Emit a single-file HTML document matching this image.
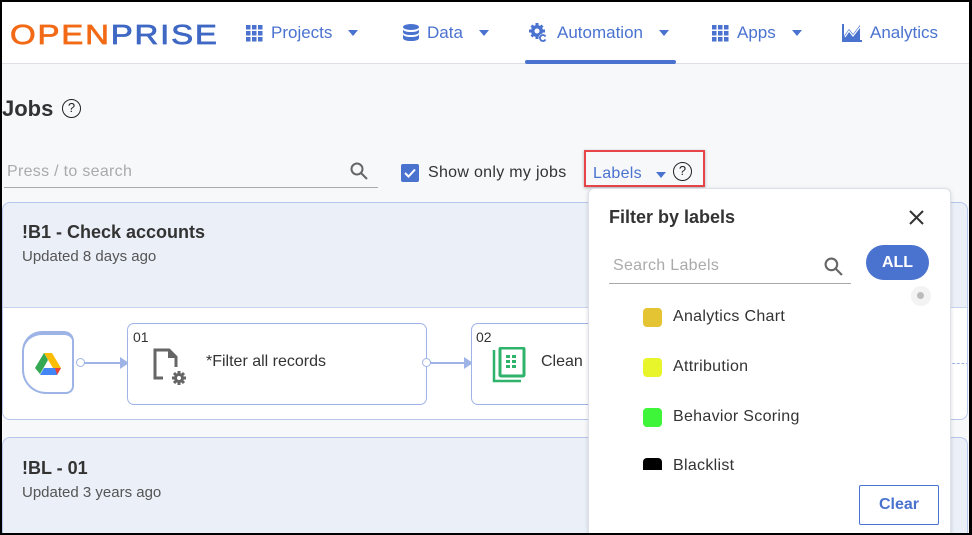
<!DOCTYPE html>
<html><head><meta charset="utf-8"><style>
*{box-sizing:border-box;margin:0;padding:0}
body{width:972px;height:535px;overflow:hidden;background:#000;font-family:"Liberation Sans",sans-serif;position:relative}
#pg{position:absolute;left:2px;top:2px;width:967px;height:531px;background:#f7f8fa;overflow:hidden}
.nav{position:absolute;left:0;top:0;width:967px;height:62px;background:#fff;border-bottom:1px solid #dcdfe4}
.ni{position:absolute;top:21px;font-size:17px;color:#4a72cf;display:flex;align-items:center;gap:8px}
.car{width:0;height:0;border-left:5px solid transparent;border-right:5px solid transparent;border-top:6px solid #4a72cf;margin-left:8px}
.t{position:absolute;white-space:nowrap}
.card{position:absolute;left:0;width:966px;border:1px solid #b6c6ea;border-radius:8px;background:#ebeff8;overflow:hidden}
.step{position:absolute;background:#fff;border:1px solid #9eb4e6;border-radius:7px}
.pop{position:absolute;left:586px;top:186px;width:363px;height:350px;background:#fff;border:1px solid #dde0e6;border-radius:6px;box-shadow:0 1px 4px rgba(0,0,0,.15)}
.lab{position:absolute;left:54px;font-size:16px;color:#333;letter-spacing:.3px}
.sw{position:absolute;left:54px;width:19px;height:19px;border-radius:4px}
.arr{position:absolute;width:0;height:0;border-top:6px solid transparent;border-bottom:6px solid transparent;border-left:9px solid #9eb4e6}
</style></head><body><div id="pg">
<div class="nav">
 <div class="t" style="left:8px;top:17px;font-size:28px;letter-spacing:1.5px;-webkit-text-stroke:0.7px;transform:scaleX(1.18);transform-origin:left"><span style="color:#f26a16">OPEN</span><span style="color:#3f68c4">PRISE</span></div>
 <div class="ni" style="left:244px"><svg width="17" height="17" viewBox="0 0 17 17" fill="#4a72cf"><rect x="0" y="0" width="4.5" height="4.5"/><rect x="6" y="0" width="4.5" height="4.5"/><rect x="12" y="0" width="4.5" height="4.5"/><rect x="0" y="6" width="4.5" height="4.5"/><rect x="6" y="6" width="4.5" height="4.5"/><rect x="12" y="6" width="4.5" height="4.5"/><rect x="0" y="12" width="4.5" height="4.5"/><rect x="6" y="12" width="4.5" height="4.5"/><rect x="12" y="12" width="4.5" height="4.5"/></svg>Projects<span class="car"></span></div>
 <div class="ni" style="left:401px"><svg width="16" height="18" viewBox="0 0 16 18" fill="#4a72cf"><ellipse cx="8" cy="3" rx="8" ry="3"/><path d="M0 5c0 2 3.5 3 8 3s8-1 8-3v3c0 2-3.5 3-8 3S0 10 0 8z"/><path d="M0 10c0 2 3.5 3 8 3s8-1 8-3v4c0 2-3.5 3-8 3s-8-1-8-3z"/></svg>Data<span class="car"></span></div>
 <div class="ni" style="left:527px"><svg width="20" height="20" viewBox="0 0 20 20" fill="#4a72cf"><circle cx="8" cy="8" r="6"/><g stroke="#4a72cf" stroke-width="3"><path d="M8 0v16M0 8h16M2.5 2.5l11 11M13.5 2.5l-11 11"/></g><circle cx="8" cy="8" r="2.5" fill="#fff"/><circle cx="14" cy="15" r="4.5" fill="#fff"/><path d="M16.5 13.5a3 3 0 1 0 0 3" stroke="#4a72cf" stroke-width="1.8" fill="none"/></svg>Automation<span class="car"></span></div>
 <div style="position:absolute;left:523px;top:58px;width:151px;height:4px;background:#4a72cf;border-radius:2px"></div>
 <div class="ni" style="left:710px"><svg width="17" height="17" viewBox="0 0 17 17" fill="#4a72cf"><rect x="0" y="0" width="4.5" height="4.5"/><rect x="6" y="0" width="4.5" height="4.5"/><rect x="12" y="0" width="4.5" height="4.5"/><rect x="0" y="6" width="4.5" height="4.5"/><rect x="6" y="6" width="4.5" height="4.5"/><rect x="12" y="6" width="4.5" height="4.5"/><rect x="0" y="12" width="4.5" height="4.5"/><rect x="6" y="12" width="4.5" height="4.5"/><rect x="12" y="12" width="4.5" height="4.5"/></svg>Apps<span class="car"></span></div>
 <div class="ni" style="left:840px"><svg width="20" height="18" viewBox="0 0 20 18"><path d="M1 0v17h19" stroke="#4a72cf" stroke-width="2" fill="none"/><path d="M2 16V12l5-7 4 5 7-9v15z" fill="#4a72cf"/><path d="M3 13l4-6 4 5 7-9" stroke="#fff" stroke-width="1.2" fill="none"/></svg>Analytics</div>
</div>
<div class="t" style="left:0;top:94px;font-size:22px;font-weight:bold;color:#333">Jobs</div>
<div class="t" style="left:60px;top:97px;width:19px;height:19px;border:1.5px solid #222;border-radius:50%;font-size:13px;text-align:center;line-height:16px;color:#222">?</div>
<div class="t" style="left:5px;top:161px;font-size:16px;color:#aaa;letter-spacing:.3px">Press / to search</div>
<svg class="t" style="left:348px;top:160px" width="18" height="18" viewBox="0 0 18 18"><circle cx="7" cy="7" r="5.5" stroke="#666" stroke-width="2" fill="none"/><path d="M11 11l6 6" stroke="#666" stroke-width="2"/></svg>
<div class="t" style="left:2px;top:185px;width:374px;height:1px;background:#aaa"></div>
<div class="t" style="left:399px;top:162px;width:18px;height:18px;background:#4a72cf;border-radius:2px"><svg width="18" height="18"><path d="M4 9l3.5 3.5L14 5.5" stroke="#fff" stroke-width="2" fill="none"/></svg></div>
<div class="t" style="left:426px;top:162px;font-size:16px;color:#333;letter-spacing:.3px">Show only my jobs</div>
<div class="t" style="left:582px;top:148px;width:121px;height:37px;border:2px solid #e8454a;box-shadow:0 1px 3px rgba(0,0,0,.3)"></div>
<div class="t" style="left:591px;top:163px;font-size:16px;color:#4a72cf;letter-spacing:.3px">Labels</div>
<div class="t" style="left:654px;top:170px;border-left:5px solid transparent;border-right:5px solid transparent;border-top:6px solid #4a72cf"></div>
<div class="t" style="left:671px;top:160px;width:19px;height:19px;border:1.5px solid #222;border-radius:50%;font-size:13px;text-align:center;line-height:16px;color:#222">?</div>

<div class="card" style="top:200px;height:218px">
 <div class="t" style="left:19px;top:19px;font-size:18px;font-weight:bold;color:#333">!B1 - Check accounts</div>
 <div class="t" style="left:19px;top:45px;font-size:15px;color:#555">Updated 8 days ago</div>
 <div style="position:absolute;left:0;top:104px;width:966px;height:114px;background:#fff;border-top:1px solid #c8d3ee"></div>
 <div class="t" style="left:19px;top:128px;width:52px;height:63px;border:2px solid #9eb4e6;border-top-width:4px;border-radius:20px 10px 8px 24px;background:#fff"></div>
 <svg class="t" style="left:32px;top:150px" width="26" height="22" viewBox="0 0 26 22"><path d="M9 0h8l9 15h-8z" fill="#fbbc04"/><path d="M9 0l4 7-8 14L0 15z" fill="#34a853"/><path d="M5 22l4-7h17l-4 7z" fill="#4285f4"/><path d="M22 22l4-7h-6z" fill="#ea4335"/></svg>
 <div class="t" style="left:74px;top:159px;width:46px;height:1.5px;background:#9eb4e6"></div>
 <div class="arr" style="left:117px;top:154px"></div>
 <div class="t" style="left:73px;top:155px;width:9px;height:9px;border:1.5px solid #9eb4e6;border-radius:50%;background:#fff"></div>
 <div class="step" style="left:124px;top:120px;width:300px;height:82px"></div>
 <div class="t" style="left:130px;top:126px;font-size:14px;color:#333">01</div>
 <svg class="t" style="left:150px;top:145px" width="36" height="38" viewBox="0 0 36 38"><path d="M10 30H2V2h14l7 7v10" stroke="#666" stroke-width="3" fill="none"/><path d="M15 1v9h8z" fill="#666"/><circle cx="26" cy="30" r="5" fill="#666"/><g stroke="#666" stroke-width="3"><path d="M26 23v14M19 30h14M21 25l10 10M31 25l-10 10"/></g><circle cx="26" cy="30" r="2" fill="#fff"/></svg>
 <div class="t" style="left:203px;top:150px;font-size:16px;color:#333">*Filter all records</div>
 <div class="t" style="left:424px;top:159px;width:40px;height:1.5px;background:#9eb4e6"></div>
 <div class="arr" style="left:461px;top:154px"></div>
 <div class="t" style="left:419px;top:155px;width:9px;height:9px;border:1.5px solid #9eb4e6;border-radius:50%;background:#fff"></div>
 <div class="step" style="left:468px;top:120px;width:200px;height:82px"></div>
 <div class="t" style="left:473px;top:126px;font-size:14px;color:#333">02</div>
 <svg class="t" style="left:489px;top:144px" width="34" height="38" viewBox="0 0 34 38"><path d="M2 3v31h27" stroke="#2fb36a" stroke-width="2.5" fill="none"/><rect x="8" y="1" width="24" height="28" stroke="#2fb36a" stroke-width="3" fill="none" rx="1"/><g fill="#2fb36a"><rect x="14" y="8" width="4" height="3"/><rect x="20" y="8" width="4" height="3"/><rect x="14" y="13" width="4" height="3"/><rect x="20" y="13" width="4" height="3"/><rect x="14" y="18" width="4" height="3"/><rect x="20" y="18" width="4" height="3"/></g></svg>
 <div class="t" style="left:538px;top:150px;font-size:16px;color:#333">Clean</div>
 <div class="t" style="left:940px;top:160px;width:26px;border-top:1.5px dashed #9eb4e6"></div>
</div>
<div class="card" style="top:435px;height:110px">
 <div class="t" style="left:19px;top:20px;font-size:18px;font-weight:bold;color:#333">!BL - 01</div>
 <div class="t" style="left:19px;top:46px;font-size:15px;color:#555">Updated 3 years ago</div>
</div>

<div class="pop">
 <div class="t" style="left:20px;top:18px;font-size:18px;font-weight:bold;color:#333">Filter by labels</div>
 <svg class="t" style="left:320px;top:21px" width="15" height="15"><path d="M1 1l13 13M14 1L1 14" stroke="#333" stroke-width="2"/></svg>
 <div class="t" style="left:24px;top:68px;font-size:16px;color:#aaa;letter-spacing:.3px">Search Labels</div>
 <svg class="t" style="left:235px;top:68px" width="19" height="19" viewBox="0 0 18 18"><circle cx="7" cy="7" r="5.5" stroke="#666" stroke-width="2" fill="none"/><path d="M11 11l6 6" stroke="#666" stroke-width="2"/></svg>
 <div class="t" style="left:20px;top:94px;width:242px;height:1px;background:#aaa"></div>
 <div class="t" style="left:277px;top:56px;width:63px;height:35px;border-radius:18px;background:#4a72cf;color:#fff;font-weight:bold;font-size:16px;text-align:center;line-height:35px">ALL</div>
 <div class="t" style="left:322px;top:97px;width:20px;height:20px;border-radius:50%;background:#f3f3f3"></div>
 <div class="t" style="left:328px;top:103px;width:7px;height:7px;border-radius:50%;background:#bbb"></div>
 <div class="sw" style="top:119px;background:#e5c434"></div><div class="lab" style="left:84px;top:119px">Analytics Chart</div>
 <div class="sw" style="top:169px;background:#e8f52a"></div><div class="lab" style="left:84px;top:169px">Attribution</div>
 <div class="sw" style="top:219px;background:#3ef53a"></div><div class="lab" style="left:84px;top:219px">Behavior Scoring</div>
 <div style="position:absolute;left:0;top:265px;width:360px;height:16px;overflow:hidden"><div class="sw" style="top:4px;background:#000"></div><div class="lab" style="left:84px;top:3px">Blacklist</div></div>
 <div class="t" style="left:270px;top:296px;width:80px;height:40px;border:1.5px solid #4a72cf;border-radius:2px;color:#4a72cf;font-weight:bold;font-size:16px;text-align:center;line-height:37px">Clear</div>
</div>
</div></body></html>
